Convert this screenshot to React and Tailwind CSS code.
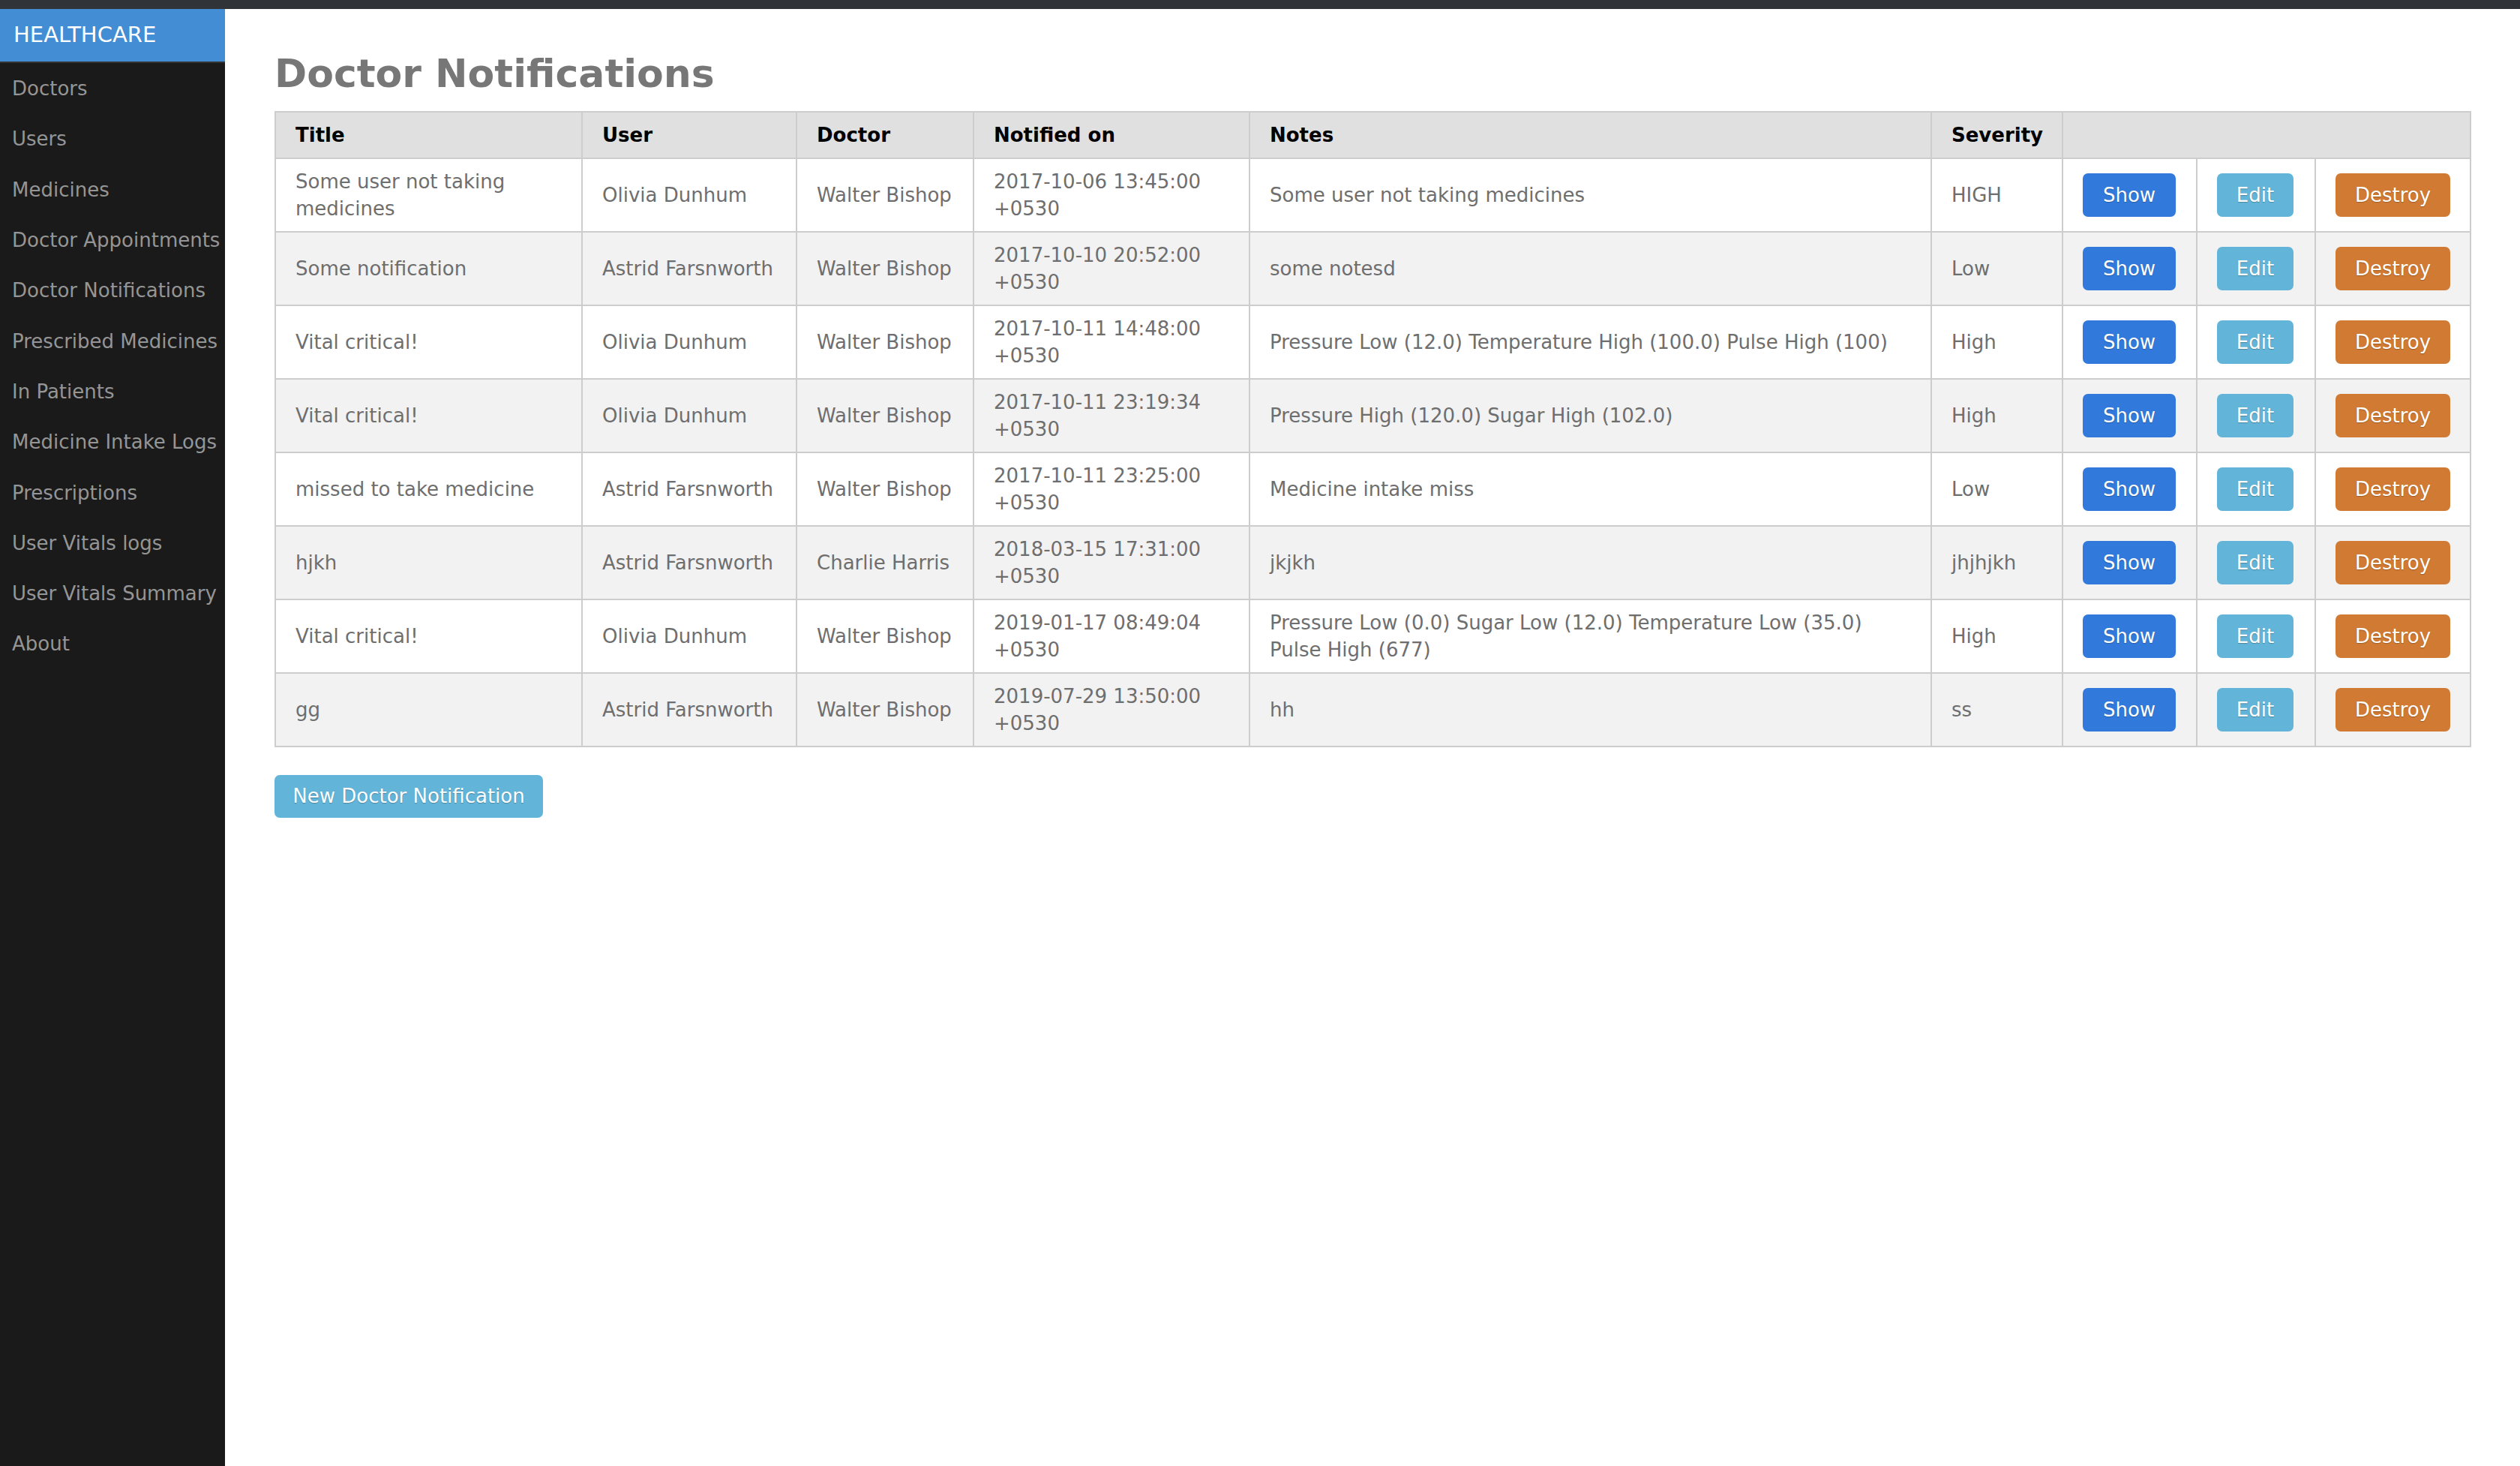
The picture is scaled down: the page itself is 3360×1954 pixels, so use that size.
const navItems = [
  "Doctors",
  "Users",
  "Medicines",
  "Doctor Appointments",
  "Doctor Notifications",
  "Prescribed Medicines",
  "In Patients",
  "Medicine Intake Logs",
  "Prescriptions",
  "User Vitals logs",
  "User Vitals Summary",
  "About",
];

const notifications = [
  {
    title: "Some user not taking medicines",
    user: "Olivia Dunhum",
    doctor: "Walter Bishop",
    notifiedOn: "2017-10-06 13:45:00 +0530",
    notes: "Some user not taking medicines",
    severity: "HIGH",
  },
  {
    title: "Some notification",
    user: "Astrid Farsnworth",
    doctor: "Walter Bishop",
    notifiedOn: "2017-10-10 20:52:00 +0530",
    notes: "some notesd",
    severity: "Low",
  },
  {
    title: "Vital critical!",
    user: "Olivia Dunhum",
    doctor: "Walter Bishop",
    notifiedOn: "2017-10-11 14:48:00 +0530",
    notes: "Pressure Low (12.0) Temperature High (100.0) Pulse High (100)",
    severity: "High",
  },
  {
    title: "Vital critical!",
    user: "Olivia Dunhum",
    doctor: "Walter Bishop",
    notifiedOn: "2017-10-11 23:19:34 +0530",
    notes: "Pressure High (120.0) Sugar High (102.0)",
    severity: "High",
  },
  {
    title: "missed to take medicine",
    user: "Astrid Farsnworth",
    doctor: "Walter Bishop",
    notifiedOn: "2017-10-11 23:25:00 +0530",
    notes: "Medicine intake miss",
    severity: "Low",
  },
  {
    title: "hjkh",
    user: "Astrid Farsnworth",
    doctor: "Charlie Harris",
    notifiedOn: "2018-03-15 17:31:00 +0530",
    notes: "jkjkh",
    severity: "jhjhjkh",
  },
  {
    title: "Vital critical!",
    user: "Olivia Dunhum",
    doctor: "Walter Bishop",
    notifiedOn: "2019-01-17 08:49:04 +0530",
    notes: "Pressure Low (0.0) Sugar Low (12.0) Temperature Low (35.0) Pulse High (677)",
    severity: "High",
  },
  {
    title: "gg",
    user: "Astrid Farsnworth",
    doctor: "Walter Bishop",
    notifiedOn: "2019-07-29 13:50:00 +0530",
    notes: "hh",
    severity: "ss",
  },
];

const th = "border-2 border-[#cdcdcd] px-[26px] py-[12px] text-left font-bold text-black";
const td = "border-2 border-[#cdcdcd] px-[26px] py-[12px] align-middle";
const btn =
  "inline-flex h-[58px] items-center justify-center rounded-[7px] text-white [text-shadow:0_1px_1px_rgba(0,0,0,0.25)]";

function Sidebar() {
  return (
    <aside className="w-[300px] shrink-0 bg-[#1a1a1a]">
      <div className="flex h-[70px] items-center bg-[#428dd3] pl-[18px] text-[29px] text-white">
        HEALTHCARE
      </div>
      <div className="h-[2px] bg-[#333]" />
      <nav className="mt-[1px] flex flex-col">
        {navItems.map((item) => (
          <a
            key={item}
            href="#"
            className="flex h-[67.3px] items-center whitespace-nowrap pl-[16px] text-[26px] text-[#959595]"
          >
            {item}
          </a>
        ))}
      </nav>
    </aside>
  );
}

export default function App() {
  return (
    <div className="flex min-h-[1954px] flex-col bg-white font-['DejaVu_Sans',Verdana,sans-serif]">
      <div className="h-[12px] bg-[#303438]" />
      <div className="flex flex-1">
        <Sidebar />
        <main className="flex-1 px-[66px]">
          <h1 className="mt-[58px] mb-[21px] text-[52px] font-bold leading-[57px] text-[#777]">
            Doctor Notifications
          </h1>
          <table className="w-full table-fixed border-collapse text-[26px] leading-[36px] text-[#6e6e6e]">
            <colgroup>
              <col className="w-[409px]" />
              <col className="w-[286px]" />
              <col className="w-[236px]" />
              <col className="w-[368px]" />
              <col className="w-[909px]" />
              <col className="w-[175px]" />
              <col className="w-[179px]" />
              <col className="w-[158px]" />
              <col className="w-[207px]" />
            </colgroup>
            <thead>
              <tr className="bg-[#e0e0e0]">
                <th className={th}>Title</th>
                <th className={th}>User</th>
                <th className={th}>Doctor</th>
                <th className={th}>Notified on</th>
                <th className={th}>Notes</th>
                <th className={th}>Severity</th>
                <th className={th} colSpan={3}></th>
              </tr>
            </thead>
            <tbody>
              {notifications.map((n, i) => (
                <tr key={i} className={i % 2 === 0 ? "bg-white" : "bg-[#f2f2f2]"}>
                  <td className={td}>{n.title}</td>
                  <td className={td}>{n.user}</td>
                  <td className={td}>{n.doctor}</td>
                  <td className={td}>{n.notifiedOn}</td>
                  <td className={td}>{n.notes}</td>
                  <td className={td}>{n.severity}</td>
                  <td className={td}>
                    <a href="#" className={`${btn} w-[124px] bg-[#3279dc]`}>
                      Show
                    </a>
                  </td>
                  <td className={td}>
                    <a href="#" className={`${btn} w-[102px] bg-[#62b4d8]`}>
                      Edit
                    </a>
                  </td>
                  <td className={td}>
                    <a href="#" className={`${btn} w-[153px] bg-[#d07a33]`}>
                      Destroy
                    </a>
                  </td>
                </tr>
              ))}
            </tbody>
          </table>
          <a
            href="#"
            className="mt-[37px] inline-flex h-[57px] w-[358px] items-center justify-center rounded-[7px] bg-[#62b4d8] text-[26px] text-white [text-shadow:0_1px_1px_rgba(0,0,0,0.25)]"
          >
            New Doctor Notification
          </a>
        </main>
      </div>
    </div>
  );
}
